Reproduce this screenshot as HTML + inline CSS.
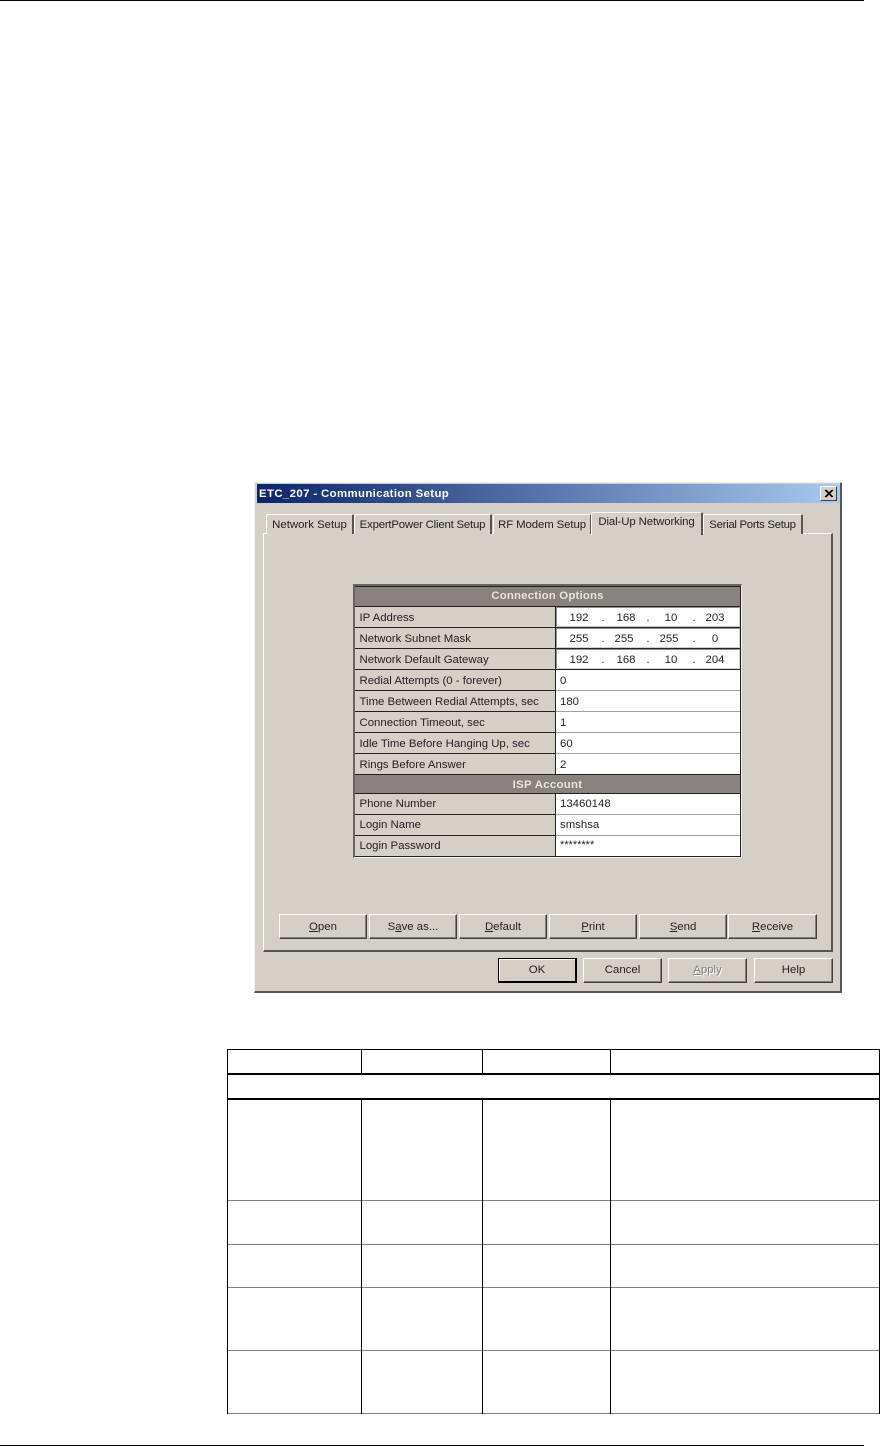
<!DOCTYPE html>
<html><head><meta charset="utf-8"><style>
html,body{margin:0;padding:0;background:#fff}
body{width:880px;height:1446px;position:relative;overflow:hidden;font-family:"Liberation Sans",sans-serif}
.a,.t,.tab,.btn,.c{position:absolute;box-sizing:border-box}
.t{font-size:11.4px;line-height:20px;height:20px;white-space:nowrap;color:#222}
.c{text-align:center}
.tab{background:#d4d0c8;border-top:1px solid #fff;border-left:1px solid #fff;border-right:2px solid #555;font-size:11.4px;line-height:20px;text-align:center;color:#222;white-space:nowrap;border-radius:2px 2px 0 0}
.btn{background:#d4d0c8;border-top:1px solid #fff;border-left:1px solid #fff;border-right:1px solid #404040;border-bottom:1px solid #404040;box-shadow:inset -1px -1px 0 #808080;font-size:11.4px;text-align:center;color:#222;line-height:25px}
.line{position:absolute;background:#000}
.ip{position:absolute;box-sizing:border-box;left:556px;width:184px;height:20px;background:#fff;border-top:1px solid #909090;border-left:1px solid #909090;border-right:1px solid #d4d0c8;border-bottom:1px solid #d4d0c8}
.w{position:absolute;box-sizing:border-box;left:556px;width:184px;height:21px;background:#fff;border-bottom:1px solid #a0a0a0}
.g{position:absolute;left:355px;width:200px;height:20px;background:#d4d0c8}
.l{left:359.5px}
.v{left:560px}
#d{position:absolute;left:0;top:0;width:880px;height:1446px;filter:blur(.35px)}
</style></head><body>
<div class="line" style="left:0;top:0;width:864px;height:1px"></div>
<div class="line" style="left:0;top:1445px;width:864px;height:1px"></div>

<div id="d">
<div class="a" style="left:254px;top:482px;width:588px;height:511px;background:#d4d0c8;border-top:1px solid #eee;border-left:1px solid #eee;border-right:2px solid #555;border-bottom:2px solid #555"></div>
<div class="a" style="left:257px;top:484px;width:583px;height:19px;background:linear-gradient(90deg,#0a246a,#a6caf0)"></div>
<div class="t" style="left:259px;top:484px;height:19px;line-height:20px;color:#fff;font-weight:bold;letter-spacing:.38px">ETC_207 - Communication Setup</div>
<div class="a" style="left:820px;top:486px;width:17px;height:15px;background:#d4d0c8;border-top:1px solid #fff;border-left:1px solid #fff;border-right:1px solid #404040;border-bottom:1px solid #404040"></div>
<svg class="a" style="left:824px;top:489px" width="10" height="9"><path d="M1 1L8 8M2 1L9 8M8 1L1 8M9 1L2 8" stroke="#000" stroke-width="1"/></svg>

<div class="a" style="left:263px;top:533px;width:570px;height:419px;background:#d4d0c8;border-top:1px solid #fff;border-left:1px solid #fff;border-right:2px solid #555;border-bottom:2px solid #555"></div>

<div class="tab" style="left:266px;top:514px;width:88px;height:20px">Network Setup</div>
<div class="tab" style="left:354px;top:514px;width:138px;height:20px;letter-spacing:-.2px">ExpertPower Client Setup</div>
<div class="tab" style="left:493px;top:514px;width:99px;height:20px;letter-spacing:-.1px">RF Modem Setup</div>
<div class="tab" style="left:591px;top:512px;width:112px;height:23px;line-height:19px;letter-spacing:-.1px">Dial-Up Networking</div>
<div class="tab" style="left:703px;top:514px;width:100px;height:20px;letter-spacing:-.3px">Serial Ports Setup</div>

<div class="a" style="left:353px;top:584px;width:389px;height:274px;background:#d4d0c8;border-top:2px solid #666;border-left:2px solid #666;border-right:1px solid #eee;border-bottom:1px solid #eee"></div>
<div class="a" style="left:355px;top:586px;width:386px;height:271px;background:#222"></div>
<div class="a" style="left:355px;top:587px;width:385px;height:19px;background:#87827d"></div>
<div class="t c" style="left:355px;top:586px;width:385px;color:#e8e4dc;font-weight:bold;letter-spacing:.2px">Connection Options</div>

<div class="g" style="top:607px"></div><div class="g" style="top:628px"></div><div class="g" style="top:649px"></div><div class="g" style="top:670px"></div><div class="g" style="top:691px"></div><div class="g" style="top:712px"></div><div class="g" style="top:733px"></div><div class="g" style="top:754px"></div>

<div class="ip" style="top:607px"></div><div class="ip" style="top:628px"></div><div class="ip" style="top:649px"></div>
<div class="w" style="top:670px"></div><div class="w" style="top:691px"></div><div class="w" style="top:712px"></div><div class="w" style="top:733px"></div><div class="w" style="top:754px;height:20px;border:0"></div>

<div class="a" style="left:355px;top:775px;width:385px;height:18px;background:#87827d"></div>
<div class="t c" style="left:355px;top:775px;width:385px;color:#e8e4dc;font-weight:bold;letter-spacing:.3px">ISP Account</div>

<div class="g" style="top:794px"></div><div class="g" style="top:815px"></div><div class="g" style="top:836px"></div>
<div class="w" style="top:794px"></div><div class="w" style="top:815px"></div><div class="w" style="top:836px;height:20px;border:0"></div>

<div class="t l" style="top:608px">IP Address</div>
<div class="t l" style="top:629px">Network Subnet Mask</div>
<div class="t l" style="top:650px">Network Default Gateway</div>
<div class="t l" style="top:671px">Redial Attempts (0 - forever)</div>
<div class="t l" style="top:692px">Time Between Redial Attempts, sec</div>
<div class="t l" style="top:713px">Connection Timeout, sec</div>
<div class="t l" style="top:734px">Idle Time Before Hanging Up, sec</div>
<div class="t l" style="top:755px">Rings Before Answer</div>
<div class="t l" style="top:794px">Phone Number</div>
<div class="t l" style="top:815px">Login Name</div>
<div class="t l" style="top:836px">Login Password</div>

<div class="t c" style="left:559px;top:608px;width:40px">192</div><div class="t c" style="left:593px;top:608px;width:20px">.</div><div class="t c" style="left:606px;top:608px;width:40px">168</div><div class="t c" style="left:638px;top:608px;width:20px">.</div><div class="t c" style="left:651px;top:608px;width:40px">10</div><div class="t c" style="left:684px;top:608px;width:20px">.</div><div class="t c" style="left:695px;top:608px;width:40px">203</div>
<div class="t c" style="left:559px;top:629px;width:40px">255</div><div class="t c" style="left:593px;top:629px;width:20px">.</div><div class="t c" style="left:604px;top:629px;width:40px">255</div><div class="t c" style="left:638px;top:629px;width:20px">.</div><div class="t c" style="left:649px;top:629px;width:40px">255</div><div class="t c" style="left:684px;top:629px;width:20px">.</div><div class="t c" style="left:695px;top:629px;width:40px">0</div>
<div class="t c" style="left:559px;top:650px;width:40px">192</div><div class="t c" style="left:593px;top:650px;width:20px">.</div><div class="t c" style="left:606px;top:650px;width:40px">168</div><div class="t c" style="left:638px;top:650px;width:20px">.</div><div class="t c" style="left:651px;top:650px;width:40px">10</div><div class="t c" style="left:684px;top:650px;width:20px">.</div><div class="t c" style="left:695px;top:650px;width:40px">204</div>

<div class="t v" style="top:671px">0</div>
<div class="t v" style="top:692px">180</div>
<div class="t v" style="top:713px">1</div>
<div class="t v" style="top:734px">60</div>
<div class="t v" style="top:755px">2</div>
<div class="t v" style="top:794px">13460148</div>
<div class="t v" style="top:815px">smshsa</div>
<div class="t v" style="top:835px;font-size:11px">********</div>

<div class="btn" style="left:279px;top:914px;width:88px;height:25px"><u>O</u>pen</div>
<div class="btn" style="left:369px;top:914px;width:88px;height:25px">S<u>a</u>ve as...</div>
<div class="btn" style="left:459px;top:914px;width:88px;height:25px"><u>D</u>efault</div>
<div class="btn" style="left:549px;top:914px;width:88px;height:25px"><u>P</u>rint</div>
<div class="btn" style="left:639px;top:914px;width:88px;height:25px"><u>S</u>end</div>
<div class="btn" style="left:728px;top:914px;width:89px;height:25px"><u>R</u>eceive</div>

<div class="btn" style="left:498px;top:958px;width:79px;height:25px;line-height:22px;border:1px solid #000;border-right:2px solid #000;border-bottom:2px solid #000;box-shadow:inset 1px 1px 0 #fff">OK</div>
<div class="btn" style="left:583px;top:958px;width:79px;height:25px;line-height:23px">Cancel</div>
<div class="btn" style="left:668px;top:958px;width:79px;height:25px;line-height:23px;color:#808080;text-shadow:1px 1px 0 #fff"><u>A</u>pply</div>
<div class="btn" style="left:754px;top:958px;width:79px;height:25px;line-height:23px">Help</div>
</div>

<div class="line" style="left:227px;top:1049px;width:653px;height:1px"></div>
<div class="line" style="left:227px;top:1073px;width:653px;height:2px"></div>
<div class="line" style="left:227px;top:1098px;width:653px;height:2px"></div>
<div class="line" style="left:227px;top:1200px;width:653px;height:1px;background:#808080"></div>
<div class="line" style="left:227px;top:1244px;width:653px;height:1px;background:#808080"></div>
<div class="line" style="left:227px;top:1287px;width:653px;height:1px;background:#808080"></div>
<div class="line" style="left:227px;top:1350px;width:653px;height:1px;background:#808080"></div>
<div class="line" style="left:227px;top:1413px;width:653px;height:1px;background:#808080"></div>
<div class="line" style="left:227px;top:1049px;width:1px;height:365px"></div>
<div class="line" style="left:879px;top:1049px;width:1px;height:365px"></div>
<div class="line" style="left:361px;top:1049px;width:1px;height:25px"></div>
<div class="line" style="left:482px;top:1049px;width:1px;height:25px"></div>
<div class="line" style="left:610px;top:1049px;width:1px;height:25px"></div>
<div class="line" style="left:361px;top:1099px;width:1px;height:315px"></div>
<div class="line" style="left:482px;top:1099px;width:1px;height:315px"></div>
<div class="line" style="left:610px;top:1099px;width:1px;height:315px"></div>
</body></html>
